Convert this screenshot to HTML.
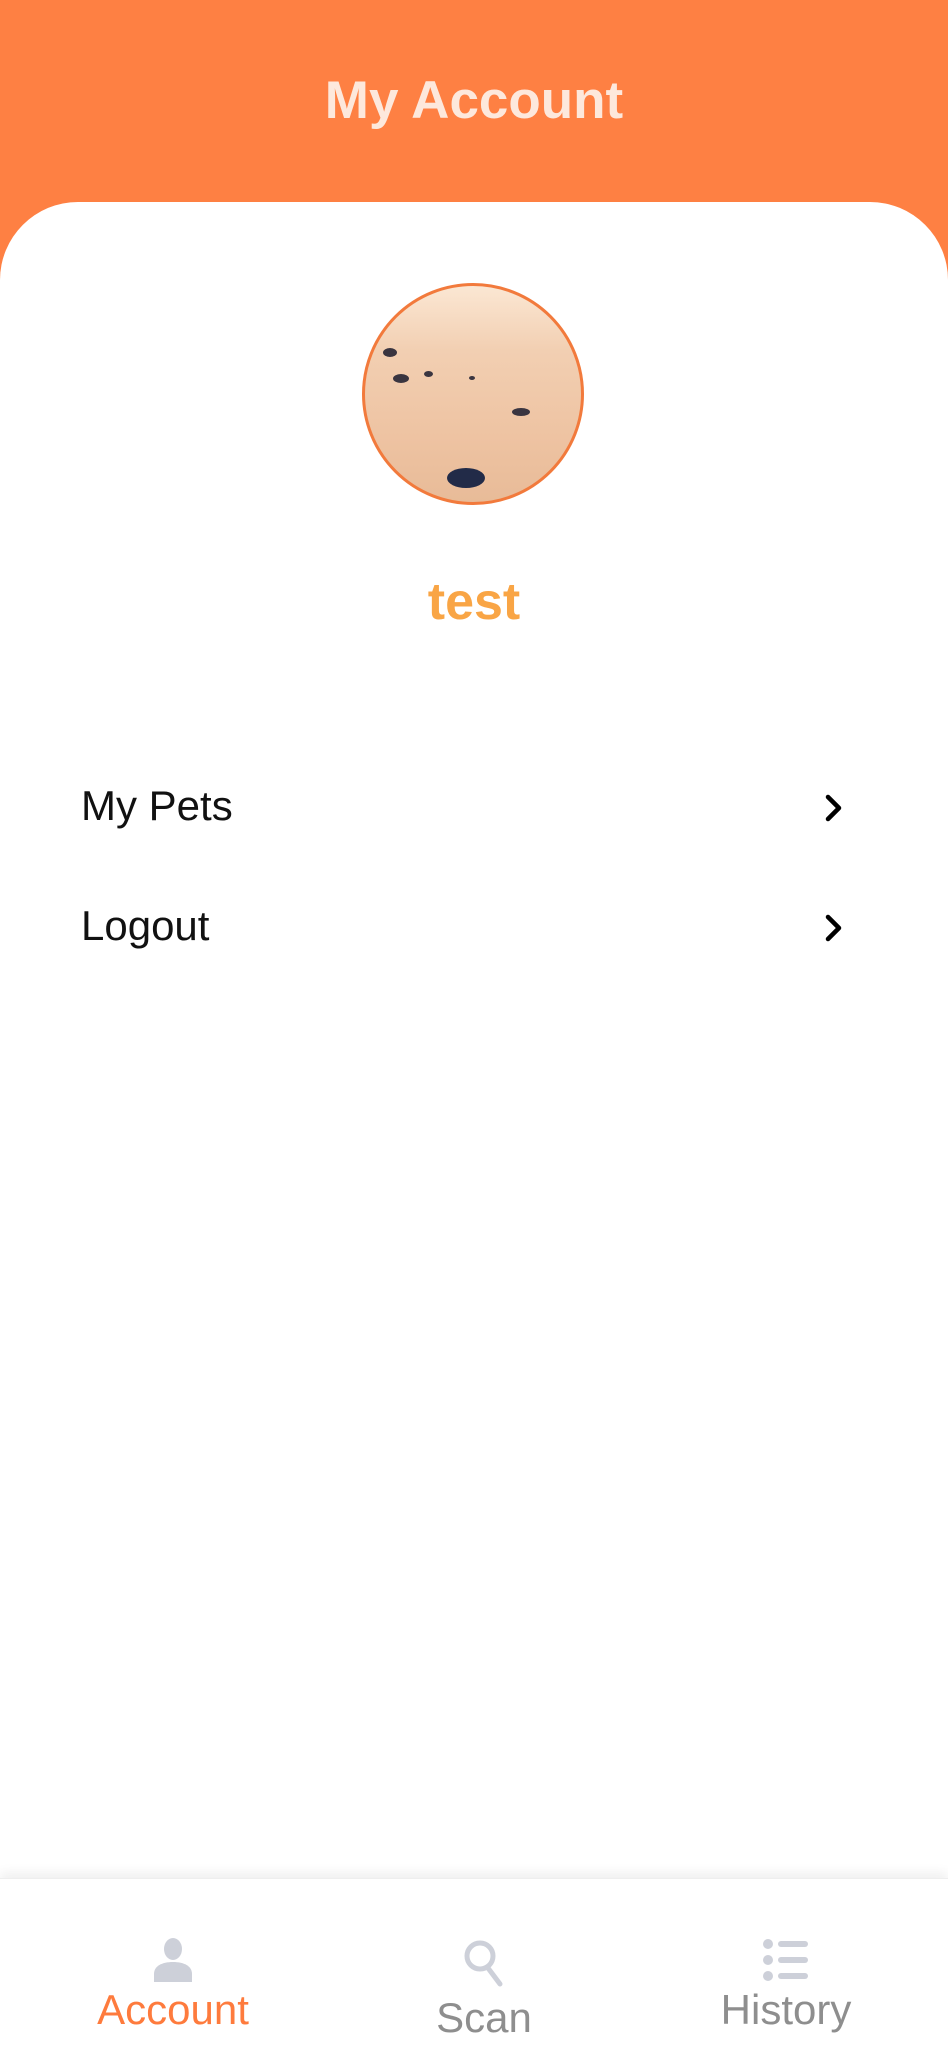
<!DOCTYPE html>
<html><head><meta charset="utf-8"><style>
*{margin:0;padding:0;box-sizing:border-box}
body{width:948px;height:2048px;position:relative;background:#fff;font-family:"Liberation Sans",sans-serif;overflow:hidden}
.hdr{position:absolute;left:0;top:0;width:948px;height:300px;background:#fe8043}
.title{position:absolute;left:0;width:948px;top:70px;text-align:center;color:#fde8dc;font-weight:bold;font-size:53px}
.card{position:absolute;left:0;top:202px;width:948px;height:1700px;background:#fff;border-radius:78px 78px 0 0}
.av{position:absolute;left:362px;top:283px;width:222px;height:222px;border-radius:50%;border:3px solid #f27a3c;overflow:hidden;background:linear-gradient(180deg,#fbe7d3 0%,#f2cfb2 30%,#eec3a2 70%,#e8bb98 100%)}
.p{position:absolute;border-radius:50%;background:#3a3540}
.name{position:absolute;left:0;width:948px;top:572px;text-align:center;color:#f9a545;font-weight:bold;font-size:52px}
.row{position:absolute;left:81px;font-size:42px;color:#111}
.chev{position:absolute;left:822px}
.tab{position:absolute;left:0;top:1878px;width:948px;height:170px;background:#fff;box-shadow:0 -6px 10px rgba(0,0,0,0.06);border-top:1px solid #eee}
.lbl{position:absolute;font-size:42px;text-align:center;width:300px}
</style></head><body>
<div class="hdr"></div>
<div class="title">My Account</div>
<div class="card"></div>
<div class="av">
<div class="p" style="left:18px;top:62px;width:14px;height:9px"></div>
<div class="p" style="left:28px;top:88px;width:16px;height:9px"></div>
<div class="p" style="left:59px;top:85px;width:9px;height:6px"></div>
<div class="p" style="left:104px;top:90px;width:6px;height:4px"></div>
<div class="p" style="left:147px;top:122px;width:18px;height:8px"></div>
<div class="p" style="left:82px;top:182px;width:38px;height:20px;background:#222b48"></div>
</div>
<div class="name">test</div>
<div class="row" style="top:782px">My Pets</div>
<div class="row" style="top:902px">Logout</div>
<svg class="chev" style="top:793px" width="24" height="30" viewBox="0 0 24 30"><path d="M6 4 L17 15 L6 26" fill="none" stroke="#000" stroke-width="4.5" stroke-linecap="round" stroke-linejoin="round"/></svg>
<svg class="chev" style="top:913px" width="24" height="30" viewBox="0 0 24 30"><path d="M6 4 L17 15 L6 26" fill="none" stroke="#000" stroke-width="4.5" stroke-linecap="round" stroke-linejoin="round"/></svg>
<div class="tab">
<svg style="position:absolute;left:152px;top:59px" width="42" height="44" viewBox="0 0 42 44"><ellipse cx="21" cy="11" rx="9" ry="11" fill="#cdd0d9"/><path d="M2 44 V36 C2 28 10 24 21 24 C32 24 40 28 40 36 V44 Z" fill="#cdd0d9"/></svg>
<svg style="position:absolute;left:462px;top:59px" width="46" height="50" viewBox="0 0 46 50"><circle cx="18" cy="18" r="13" fill="none" stroke="#cdd0d9" stroke-width="5"/><path d="M26 30 L38 46" stroke="#cdd0d9" stroke-width="5" stroke-linecap="round"/></svg>
<svg style="position:absolute;left:762px;top:59px" width="48" height="44" viewBox="0 0 48 44"><circle cx="6" cy="6" r="5" fill="#cdd0d9"/><circle cx="6" cy="22" r="5" fill="#cdd0d9"/><circle cx="6" cy="38" r="5" fill="#cdd0d9"/><rect x="16" y="3" width="30" height="6" rx="3" fill="#cdd0d9"/><rect x="16" y="19" width="30" height="6" rx="3" fill="#cdd0d9"/><rect x="16" y="35" width="30" height="6" rx="3" fill="#cdd0d9"/></svg>
<div class="lbl" style="left:23px;top:107px;color:#fe7b3d">Account</div>
<div class="lbl" style="left:334px;top:115px;color:#8e8e8e">Scan</div>
<div class="lbl" style="left:636px;top:107px;color:#8e8e8e">History</div>
</div>
</body></html>
